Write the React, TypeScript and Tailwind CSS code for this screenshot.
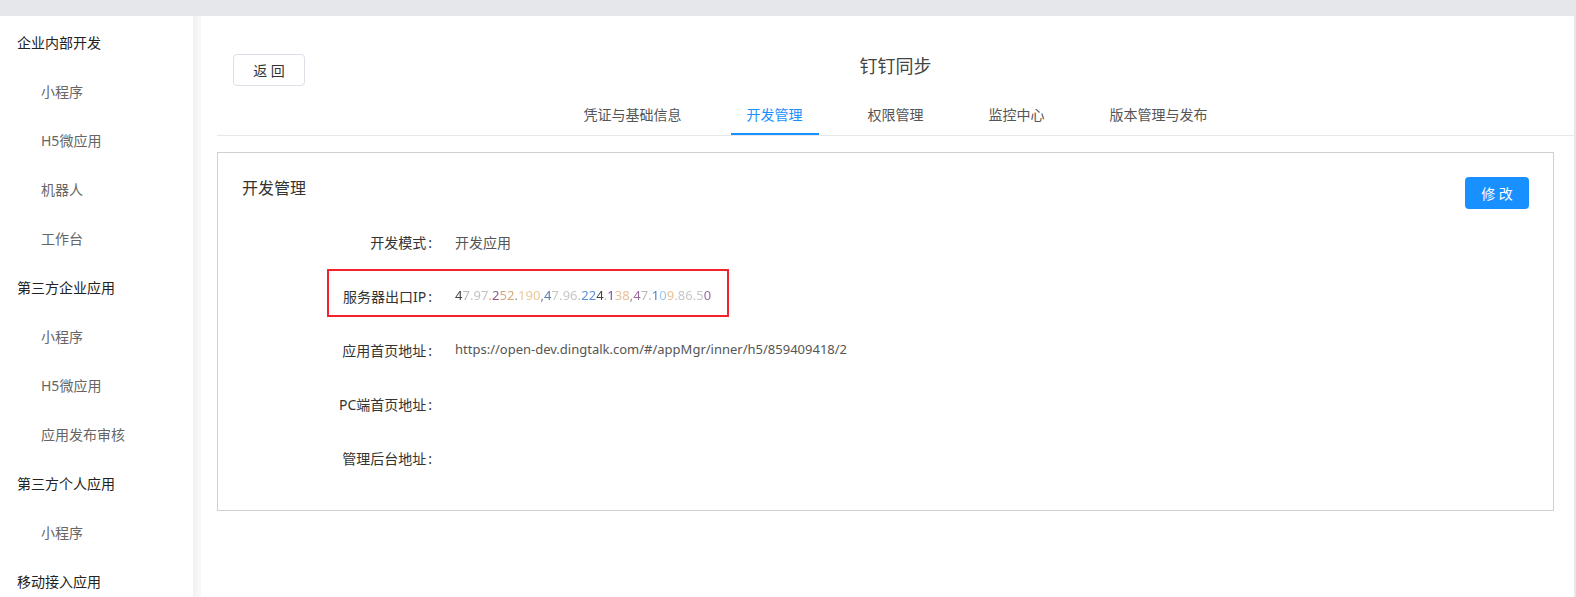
import { useState } from "react";

const menu = [
  { title: "企业内部开发", items: ["小程序", "H5微应用", "机器人", "工作台"] },
  { title: "第三方企业应用", items: ["小程序", "H5微应用", "应用发布审核"] },
  { title: "第三方个人应用", items: ["小程序"] },
  { title: "移动接入应用", items: [] as string[] },
];

const tabs = ["凭证与基础信息", "开发管理", "权限管理", "监控中心", "版本管理与发布"];

// pixelated (masked) IP string, coloured like the mosaic in the screenshot
const ipParts: [string, string][] = [
  ["4", "text-[#444]"],
  ["7", "text-[#bbb]"],
  [".97", "text-[#c4c4c4]"],
  [".", "text-[#e0a860]"],
  ["2", "text-[#8a5a8a]"],
  ["52", "text-[#d8a878]"],
  [".", "text-[#999]"],
  ["190", "text-[#ecc898]"],
  [",", "text-[#888]"],
  ["4", "text-[#5a7ab0]"],
  ["7.96.", "text-[#c8c8c8]"],
  ["22", "text-[#5a90d8]"],
  ["4", "text-[#444]"],
  [".", "text-[#bbb]"],
  ["1", "text-[#7a4aa0]"],
  ["38", "text-[#e8c098]"],
  [",", "text-[#999]"],
  ["4", "text-[#9a6a9a]"],
  ["7.", "text-[#bbb]"],
  ["1", "text-[#4a80d0]"],
  ["0", "text-[#a0c8f0]"],
  ["9", "text-[#ecc090]"],
  [".86.5", "text-[#c8c8c8]"],
  ["0", "text-[#9a6aa0]"],
];

export default function App() {
  const [active, setActive] = useState(1);

  return (
    <div className="flex h-screen flex-col overflow-hidden bg-white font-['Noto_Sans','Noto_Sans_CJK_SC',sans-serif]">
      <div className="h-4 shrink-0 bg-[#e6e7eb]" />
      <div className="flex min-h-0 flex-1">
        {/* sidebar */}
        <aside className="w-[193px] shrink-0 bg-white pt-[2px] text-[14px]">
          {menu.map((g) => (
            <div key={g.title}>
              <div className="flex h-[49px] items-center pl-[17px] text-[#222]">{g.title}</div>
              {g.items.map((it, i) => (
                <div key={i} className="flex h-[49px] items-center pl-[41px] text-[#666]">
                  {it}
                </div>
              ))}
            </div>
          ))}
        </aside>
        <div className="w-[8px] shrink-0 bg-gradient-to-r from-[#f2f2f2] to-[#f9f9f9]" />

        {/* main */}
        <main className="flex min-w-0 flex-1 flex-col pl-[16px]">
          <div className="grid grid-cols-[1fr_auto_1fr] items-start pt-[38px]">
            <div>
              <button className="ml-4 h-8 w-[72px] rounded border border-[#dcdfe6] bg-white text-[14px] text-[#333]">
                返 回
              </button>
            </div>
            <h1 className="text-[18px] leading-6 text-[#444]">钉钉同步</h1>
            <div />
          </div>

          <div className="flex justify-center gap-[33px] border-b border-[#e8e8e8]">
            {tabs.map((t, i) => (
              <button
                key={t}
                onClick={() => setActive(i)}
                className={
                  "border-b-2 px-4 pt-[18px] pb-[7px] text-[14px] leading-[22px] " +
                  (i === active ? "border-[#1890ff] text-[#1890ff]" : "border-transparent text-[#555]")
                }
              >
                {t}
              </button>
            ))}
          </div>

          <section className="mt-4 mr-[20px] border border-[#d0d0d0] pb-[25px]">
            <div className="flex items-start justify-between px-6 pt-6">
              <h2 className="text-[16px] leading-[22px] text-[#333]">开发管理</h2>
              <button className="h-8 w-16 rounded bg-[#1890ff] text-[14px] text-white">修 改</button>
            </div>

            <div className="mt-[6px] text-[14px]">
              <div className="flex h-[54px] items-center">
                <div className="w-[214px] text-right text-[#333]">开发模式<span className="ml-[2px]">:</span></div>
                <div className="pl-[23px] text-[#555]">开发应用</div>
              </div>

              <div className="relative flex h-[54px] items-center">
                <div className="w-[214px] text-right text-[#333]">服务器出口IP<span className="ml-[2px]">:</span></div>
                <div className="pl-[23px] text-[13px] tracking-[0.05px] blur-[0.7px]">
                  {ipParts.map(([s, c], i) => (
                    <span key={i} className={c}>
                      {s}
                    </span>
                  ))}
                </div>
                <div className="absolute top-0 left-[109px] h-[48px] w-[402px] border-2 border-[#f5222d]" />
              </div>

              <div className="flex h-[54px] items-center">
                <div className="w-[214px] text-right text-[#333]">应用首页地址<span className="ml-[2px]">:</span></div>
                <div className="pl-[23px] text-[13px] text-[#555]">https://open-dev.dingtalk.com/#/appMgr/inner/h5/859409418/2</div>
              </div>

              <div className="flex h-[54px] items-center">
                <div className="w-[214px] text-right text-[#333]">PC端首页地址<span className="ml-[2px]">:</span></div>
                <div className="pl-[23px] text-[#555]" />
              </div>

              <div className="flex h-[54px] items-center">
                <div className="w-[214px] text-right text-[#333]">管理后台地址<span className="ml-[2px]">:</span></div>
                <div className="pl-[23px] text-[#555]" />
              </div>
            </div>
          </section>
        </main>
        <div className="w-[2px] shrink-0 bg-[#e6e7eb]" />
      </div>
    </div>
  );
}
